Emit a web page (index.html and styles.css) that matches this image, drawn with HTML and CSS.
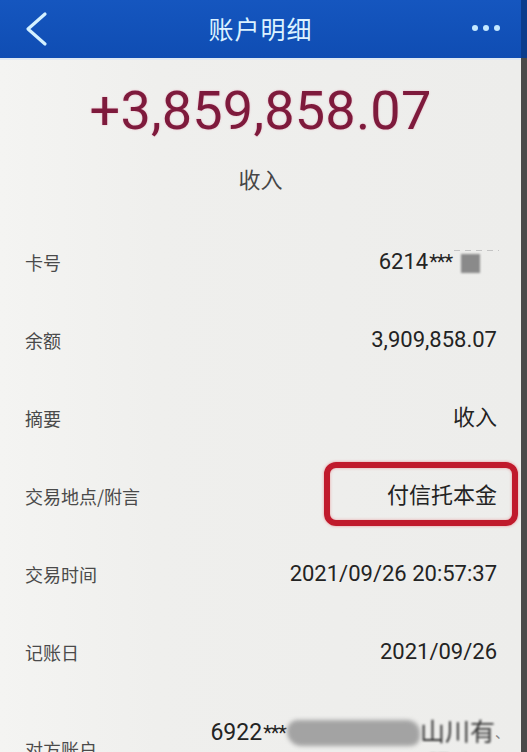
FILE: index.html
```html
<!DOCTYPE html>
<html lang="zh-CN">
<head>
<meta charset="utf-8">
<title>账户明细</title>
<link rel="stylesheet" href="styles.css">
</head>
<body>
<div class="screen">
  <div class="content">
    <header class="topbar">
      <svg class="back" width="24" height="40" viewBox="0 0 24 40"><polyline points="20,5 3,20 20,35" fill="none" stroke="#d4f1ff" stroke-width="3.2" stroke-linecap="round" stroke-linejoin="round"/></svg>
      <h1 class="title">账户明细</h1>
      <div class="more"><span></span><span></span><span></span></div>
    </header>
    <section class="summary">
      <div class="amount">+3,859,858.07</div>
      <div class="kind">收入</div>
    </section>
    <section class="rows">
      <div class="row">
        <div class="label">卡号</div>
        <div class="value card">6214<span class="stars">***</span><span class="mask"><span class="dashes"></span><span class="square"></span></span></div>
      </div>
      <div class="row">
        <div class="label">余额</div>
        <div class="value">3,909,858.07</div>
      </div>
      <div class="row">
        <div class="label">摘要</div>
        <div class="value">收入</div>
      </div>
      <div class="row">
        <div class="label">交易地点/附言</div>
        <div class="value marked">付信托本金<span class="redbox"></span></div>
      </div>
      <div class="row">
        <div class="label">交易时间</div>
        <div class="value">2021/09/26 20:57:37</div>
      </div>
      <div class="row">
        <div class="label">记账日</div>
        <div class="value">2021/09/26</div>
      </div>
      <div class="row last">
        <div class="label">对方账户</div>
        <div class="value multi">
          <div class="line">6922<span class="stars">***</span><span class="blob"></span><span class="fuzzy">山川有</span><span class="tick">、</span></div>
          <div class="line fuzzy">限公司</div>
        </div>
      </div>
    </section>
  </div>
  <div class="edge"></div>
</div>
</body>
</html>
```
FILE: styles.css
```css
* { box-sizing: border-box; margin: 0; padding: 0; }
html, body { width: 527px; height: 752px; overflow: hidden; }
body {
  background: #efefed;
  font-family: "Roboto", "Noto Sans CJK SC", sans-serif;
  color: #222;
}
.screen { display: flex; width: 527px; height: 752px; }
.content { flex: 1; min-width: 0; background: linear-gradient(90deg, #f4f4f2 0%, #efefed 30%, #ededeb 100%); }
.edge { width: 6px; background: linear-gradient(#0b3c8c 0 58px, #4a4a4a 58px); }

.topbar {
  height: 60px;
  display: flex;
  align-items: center;
  justify-content: space-between;
  padding: 0 15px 2px 25px;
  background: linear-gradient(180deg, #1556bf 0%, #0f4db3 100%);
  border-bottom: 2px solid #dfe9f3;
}
.back { display: block; margin-top: 1px; }
.title {
  font-family: "Noto Sans CJK SC", sans-serif;
  font-weight: 400;
  font-size: 25px;
  color: #dcf2ff;
  letter-spacing: 1px;
}
.more { display: flex; gap: 4.5px; width: 34px; }
.more span { width: 6.5px; height: 6.5px; border-radius: 50%; background: #c4e8ff; }

.summary { display: flex; flex-direction: column; align-items: center; padding-top: 19px; }
.amount {
  font-family: "Roboto", sans-serif;
  font-size: 54px;
  line-height: 64px;
  color: #7e1a3c;
  letter-spacing: 0.2px;
  text-shadow: 0 0 2px rgba(220, 60, 110, 0.35);
}
.kind {
  margin-top: 20px;
  font-family: "Noto Sans CJK SC", sans-serif;
  font-size: 22px;
  line-height: 30px;
  color: #464646;
}

.rows { margin-top: 30px; padding: 0 24px 0 25px; }
.row {
  height: 78px;
  display: flex;
  align-items: center;
  justify-content: space-between;
}
.label {
  font-family: "Noto Sans CJK SC", sans-serif;
  font-size: 18px;
  color: #4a4a4a;
}
.value {
  font-family: "Roboto", "Noto Sans CJK SC", sans-serif;
  font-size: 22px;
  line-height: 30px;
  color: #232323;
  text-align: right;
}
.stars { font-size: 20px; vertical-align: 3px; letter-spacing: -1px; margin-left: 1px; }
.card { display: flex; align-items: center; margin-right: -2px; }
.mask { position: relative; display: inline-block; width: 47px; height: 30px; }
.dashes {
  position: absolute; left: 2px; top: 3px; width: 45px; height: 1px;
  background: repeating-linear-gradient(90deg, #c4c4c4 0 6px, transparent 6px 11px);
}
.square {
  position: absolute; left: 9px; top: 7px; width: 19px; height: 19px;
  background: #8a8a8a; filter: blur(1px);
}

.marked { position: relative; }
.redbox {
  position: absolute;
  top: -19px; bottom: -15px; left: -63px; right: -21px;
  border: 6px solid #c01a2c;
  border-radius: 12px;
  box-shadow: 0 0 3px rgba(230, 80, 90, 0.6), inset 0 0 3px rgba(230, 80, 90, 0.5);
}

.row.last { height: auto; padding-top: 26px; }
.multi { line-height: 32px; font-size: 23px; }
.line { display: flex; align-items: center; justify-content: flex-end; }
.blob {
  display: inline-block; width: 133px; height: 26px; margin-left: 1px;
  background: #a3a3a3; border-radius: 12px 14px 10px 16px; filter: blur(2px);
}
.fuzzy { filter: blur(0.8px); color: #333; font-size: 25px; }
.line.fuzzy { font-size: 23px; }
.tick { color: #888; font-size: 14px; margin-right: -12px; }
```
